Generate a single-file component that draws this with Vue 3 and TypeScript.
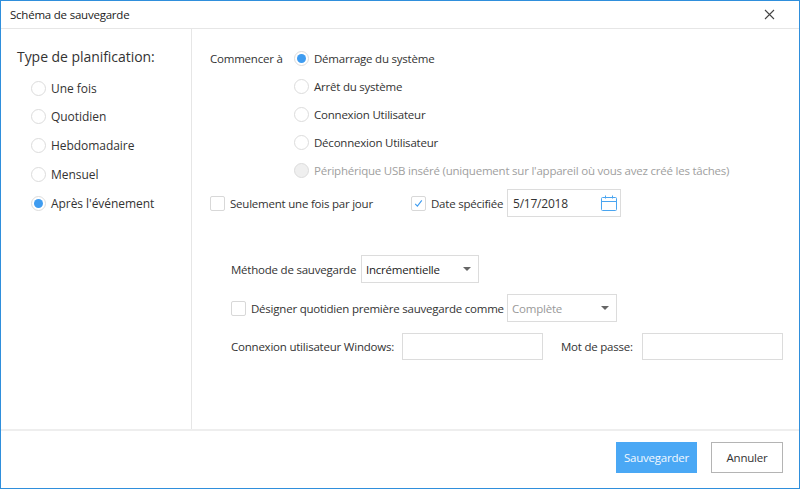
<script setup lang="ts">
const planning = [
  { label: 'Une fois', on: false },
  { label: 'Quotidien', on: false },
  { label: 'Hebdomadaire', on: false },
  { label: 'Mensuel', on: false },
  { label: "Après l'événement", on: true },
]
const starts = [
  { label: 'Démarrage du système', on: true, off: false },
  { label: 'Arrêt du système', on: false, off: false },
  { label: 'Connexion Utilisateur', on: false, off: false },
  { label: 'Déconnexion Utilisateur', on: false, off: false },
  { label: "Périphérique USB inséré (uniquement sur l'appareil où vous avez créé les tâches)", on: false, off: true },
]
</script>

<template>
  <div class="window">
    <header class="titlebar">
      <span>Schéma de sauvegarde</span>
      <svg class="close" width="11" height="11" viewBox="0 0 11 11"><path d="M1 1l9 9M10 1L1 10" stroke="#444" stroke-width="1.1" fill="none" /></svg>
    </header>
    <div class="body">
      <aside class="side">
        <h2>Type de planification:</h2>
        <div v-for="p in planning" :key="p.label" class="side-row">
          <span class="radio" :class="{ on: p.on }"></span>{{ p.label }}
        </div>
      </aside>
      <main class="main">
        <div class="start">
          <span class="start-label">Commencer à</span>
          <div class="start-list">
            <div v-for="s in starts" :key="s.label" class="start-row" :class="{ disabled: s.off }">
              <span class="radio" :class="{ on: s.on, off: s.off }"></span>{{ s.label }}
            </div>
          </div>
        </div>
        <div class="once">
          <span class="check"></span>
          <span class="once-text">Seulement une fois par jour</span>
          <span class="check checked">
            <svg width="9" height="9" viewBox="0 0 9 9"><path d="M1.2 4.8l2.2 2.4L7.8 1.4" stroke="#3f9cf0" stroke-width="1.1" fill="none" /></svg>
          </span>
          <span class="date-text">Date spécifiée</span>
          <div class="field date">
            <span>5/17/2018</span>
            <svg width="18" height="18" viewBox="0 0 18 18" fill="none" stroke="#4aa5f0" stroke-width="1">
              <rect x="1.5" y="3.5" width="15" height="13" rx="1" />
              <path d="M1.5 7.5h15M5.5 1.5v3M12.5 1.5v3" />
            </svg>
          </div>
        </div>
        <div class="form">
          <div class="method">
            <span class="method-text">Méthode de sauvegarde</span>
            <div class="field select method-select"><span>Incrémentielle</span><i class="caret"></i></div>
          </div>
          <div class="first">
            <span class="check"></span>
            <span class="first-text">Désigner quotidien première sauvegarde comme</span>
            <div class="field select first-select"><span>Complète</span><i class="caret"></i></div>
          </div>
          <div class="login">
            <span class="login-text">Connexion utilisateur Windows:</span>
            <div class="field login-field"></div>
            <span class="pass-text">Mot de passe:</span>
            <div class="field pass-field"></div>
          </div>
        </div>
      </main>
    </div>
    <footer class="footer">
      <button class="btn primary">Sauvegarder</button>
      <button class="btn">Annuler</button>
    </footer>
  </div>
</template>

<style>
html, body { margin: 0; background: #fff; }
</style>

<style scoped>
.window {
  box-sizing: border-box;
  width: 800px;
  height: 489px;
  border: 1px solid #2f8fdc;
  display: flex;
  flex-direction: column;
  font-family: "Open Sans", "Noto Sans", sans-serif;
  font-size: 11.5px;
  letter-spacing: -0.22px;
  color: #333;
  background: #fff;
}
.titlebar {
  height: 27px;
  flex: none;
  display: flex;
  align-items: center;
  justify-content: space-between;
  padding: 0 24px 0 9px;
  border-bottom: 1px solid #e6e6e6;
  color: #222;
}
.body { flex: 1; display: flex; min-height: 0; }
.side {
  width: 191px;
  flex: none;
  box-sizing: border-box;
  border-right: 1px solid #e6e6e6;
  padding: 18px 0 0 16px;
}
.side h2 { margin: 0 0 7px; font-size: 14px; font-weight: 400; line-height: 20px; letter-spacing: -0.05px; }
.side-row { height: 29px; display: flex; align-items: center; gap: 5px; padding-left: 14px; font-size: 12px; letter-spacing: -0.05px; }
.side-row:first-of-type { height: 28px; }
.radio {
  box-sizing: border-box;
  width: 15px;
  height: 15px;
  border: 1px solid #dcdcdc;
  border-radius: 50%;
  flex: none;
  display: inline-flex;
  align-items: center;
  justify-content: center;
  background: #fff;
}
.radio.on::after { content: ""; width: 9px; height: 9px; border-radius: 50%; background: #3f9cf0; }
.radio.off { background: #efefef; }
.main { flex: 1; min-width: 0; padding: 15px 0 0 18px; }
.start { display: flex; }
.start-label { width: 84px; line-height: 29px; height: 28px; }
.start-list { display: flex; flex-direction: column; }
.start-row { height: 28px; display: flex; align-items: center; gap: 5px; white-space: nowrap; }
.start-row.disabled { color: #a0a0a0; }
.once { display: flex; align-items: center; height: 28px; margin-top: 5px; }
.check {
  box-sizing: border-box;
  width: 15px;
  height: 15px;
  border: 1px solid #d8d8d8;
  border-radius: 2px;
  flex: none;
  display: inline-flex;
  align-items: center;
  justify-content: center;
}
.once-text { margin-left: 5px; width: 181px; }
.date-text { margin-left: 5px; width: 76px; white-space: nowrap; }
.field {
  box-sizing: border-box;
  border: 1px solid #dcdcdc;
  display: flex;
  align-items: center;
  justify-content: space-between;
  background: #fff;
}
.date { width: 114px; height: 28px; padding: 0 2px 0 5px; font-size: 12px; }
.form { padding-left: 21px; margin-top: 38px; }
.method { display: flex; align-items: center; height: 28px; }
.method-text { width: 130px; white-space: nowrap; }
.select { height: 28px; padding: 0 7px 0 4px; }
.method-select { width: 118px; color: #222; }
.caret { width: 0; height: 0; border-left: 4px solid transparent; border-right: 4px solid transparent; border-top: 4px solid #666; }
.first { display: flex; align-items: center; height: 28px; margin-top: 11px; }
.first-text { margin-left: 5px; width: 256px; white-space: nowrap; }
.first-select { width: 110px; color: #999; }
.login { display: flex; align-items: center; height: 27px; margin-top: 11px; }
.login-text { width: 171px; white-space: nowrap; }
.login-field { width: 141px; height: 27px; }
.pass-text { margin-left: 18px; width: 81px; white-space: nowrap; }
.pass-field { width: 141px; height: 27px; }
.footer {
  height: 59px;
  flex: none;
  border-top: 2px solid #eeeeee;
  display: flex;
  align-items: flex-start;
  justify-content: flex-end;
  gap: 14px;
  padding: 11px 16px 0 0;
  box-sizing: border-box;
}
.btn {
  box-sizing: border-box;
  width: 72px;
  height: 31px;
  border: 1px solid #b4b4b4;
  background: #fff;
  font: inherit;
  letter-spacing: inherit;
  color: #333;
  padding: 0;
}
.btn.primary { width: 81px; background: #4aa8f5; border-color: #4aa8f5; color: #f2f8fe; }
</style>
